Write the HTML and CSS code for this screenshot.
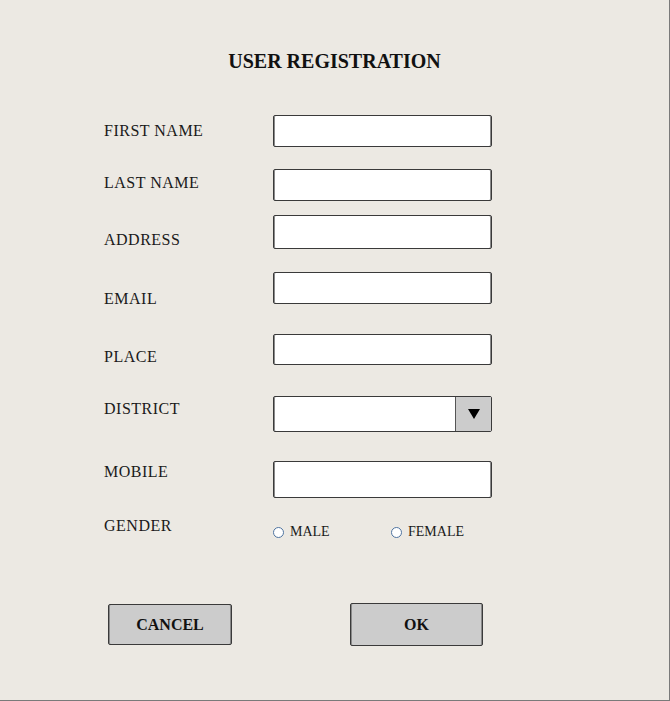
FILE: index.html
```html
<!DOCTYPE html>
<html>
<head>
<meta charset="utf-8">
<link rel="stylesheet" href="styles.css">
</head>
<body>
<div class="page">
  <h1 class="title">USER REGISTRATION</h1>
  <div class="form">
    <div class="label l-first">FIRST NAME</div>
    <div class="field h-32"></div>
    <div class="label l-last">LAST NAME</div>
    <div class="field h-32"></div>
    <div class="label l-address">ADDRESS</div>
    <div class="field h-34"></div>
    <div class="label l-email">EMAIL</div>
    <div class="field h-32"></div>
    <div class="label l-place">PLACE</div>
    <div class="field h-31"></div>
    <div class="label l-district">DISTRICT</div>
    <div class="field select h-36">
      <div class="select-box"></div>
      <div class="select-btn">
        <svg width="12" height="10" viewBox="0 0 12 10"><polygon points="0,0 12,0 6,10" fill="#000"/></svg>
      </div>
    </div>
    <div class="label l-mobile">MOBILE</div>
    <div class="field h-37"></div>
    <div class="label">GENDER</div>
    <div class="radios">
      <span class="radio"><span class="dot"></span>MALE</span>
      <span class="radio"><span class="dot"></span>FEMALE</span>
    </div>
  </div>
  <div class="buttons">
    <div class="btn btn-cancel">CANCEL</div>
    <div class="btn btn-ok">OK</div>
  </div>
</div>
</body>
</html>
```

FILE: styles.css
```css
html, body {
  margin: 0;
  padding: 0;
  background: #ece9e3;
}
.page {
  width: 670px;
  height: 701px;
  box-sizing: border-box;
  border-right: 1px solid #7a7a7a;
  border-bottom: 1px solid #7a7a7a;
  padding-top: 50px;
  font-family: "Liberation Serif", "DejaVu Serif", serif;
  color: #1a1a1a;
}
.title {
  margin: 0;
  font-size: 20px;
  line-height: 22px;
  font-weight: bold;
  text-align: center;
  color: #111;
}
.form {
  margin-top: 43px;
  padding-left: 104px;
  display: grid;
  grid-template-columns: 169px 219px;
  grid-template-rows: 54px 46px 57px 62px 62px 65px 56px 24px;
}
.label {
  font-size: 16px;
  letter-spacing: 0.5px;
  line-height: 18px;
  align-self: start;
}
.l-first { margin-top: 7px; }
.l-last { margin-top: 5px; }
.l-address { margin-top: 16px; }
.l-email { margin-top: 18px; }
.l-place { margin-top: 14px; }
.l-district { margin-top: 4px; }
.l-mobile { margin-top: 2px; }
.field {
  align-self: start;
  box-sizing: border-box;
  background: #fff;
  border: 1px solid #3a3a3a;
  box-shadow: inset 1px 0 0 #8a8a8a, inset -1px 0 0 #8a8a8a;
  border-radius: 2px;
}
.h-31 { height: 31px; }
.h-32 { height: 32px; }
.h-34 { height: 34px; }
.h-36 { height: 36px; }
.h-37 { height: 37px; }
.select {
  display: flex;
}
.select-box {
  flex: 1;
}
.select-btn {
  width: 35px;
  background: #cccccc;
  border-left: 1px solid #555;
  display: flex;
  align-items: center;
  justify-content: center;
}
.radios {
  display: flex;
  margin-top: 6px;
  font-size: 14px;
  line-height: 18px;
}
.radio {
  display: flex;
  align-items: center;
  flex-shrink: 0;
  width: 118px;
}
.dot {
  width: 9px;
  height: 9px;
  border: 1px solid #4f74a0;
  border-radius: 50%;
  background: #fff;
  margin-right: 6px;
}
.buttons {
  margin-top: 62px;
  padding-left: 108px;
  display: flex;
  align-items: center;
  gap: 118px;
}
.btn {
  box-sizing: border-box;
  background: #cccccc;
  border: 1px solid #3a3a3a;
  box-shadow: inset 1px 0 0 #8a8a8a, inset -1px 0 0 #8a8a8a;
  border-radius: 2px;
  font-size: 16px;
  font-weight: bold;
  display: flex;
  align-items: center;
  justify-content: center;
  color: #111;
}
.btn-cancel { width: 124px; height: 41px; }
.btn-ok { width: 133px; height: 43px; }
```
